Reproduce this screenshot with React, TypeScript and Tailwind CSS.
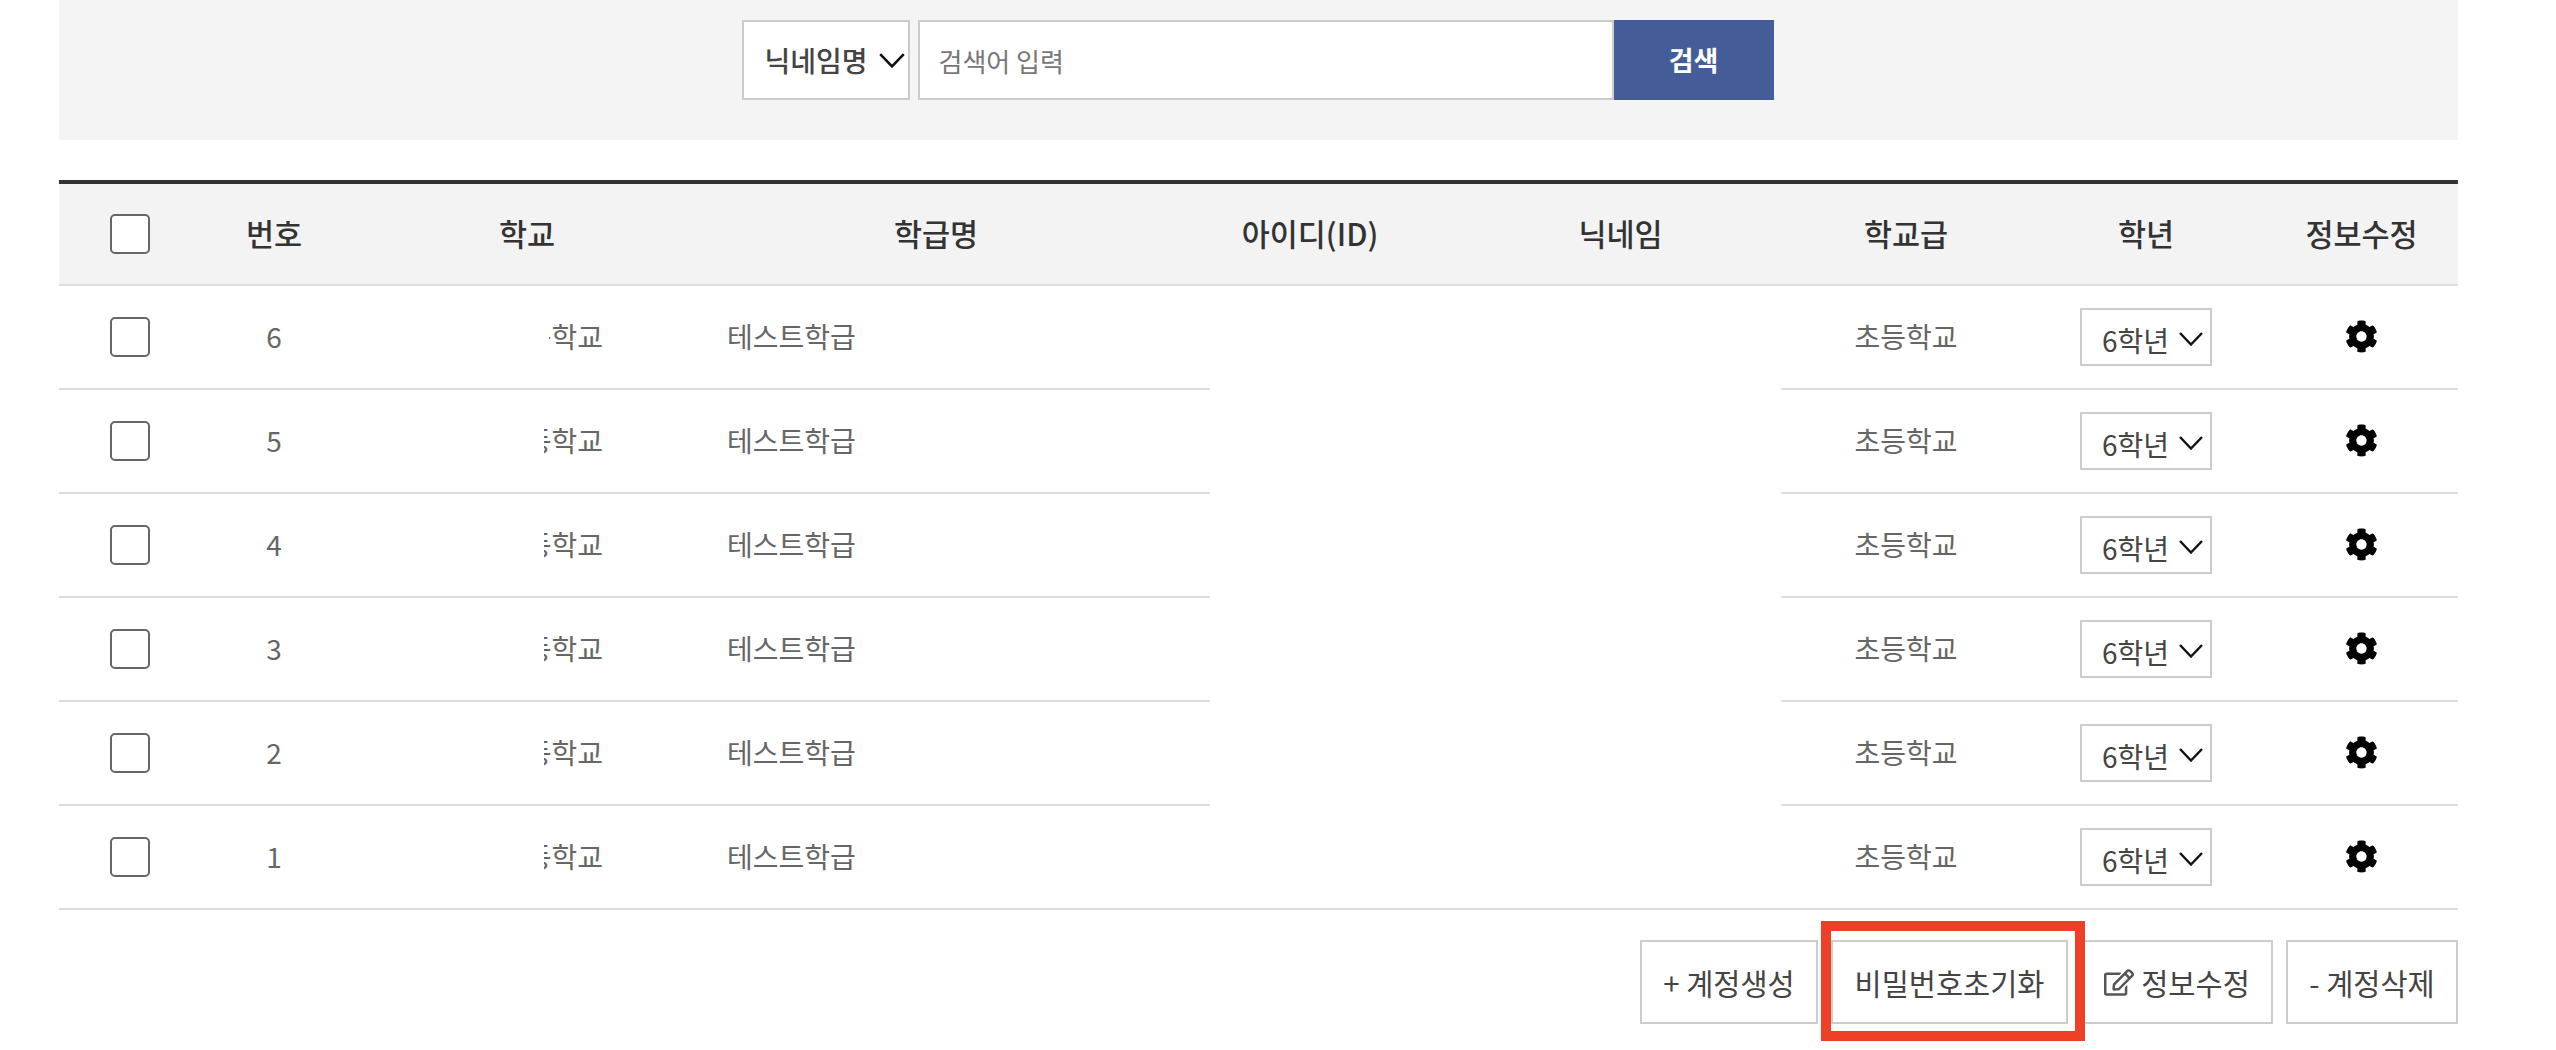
import { FaCog, FaRegEdit } from "react-icons/fa";

const rows = [6, 5, 4, 3, 2, 1];

function Chevron({ className }: { className: string }) {
  return (
    <svg viewBox="0 0 24 14" className={className} fill="none" stroke="#111" strokeWidth="2.4">
      <polyline points="1,1 12,12.5 23,1" />
    </svg>
  );
}

function Check() {
  return <div className="mx-auto w-[40px] h-[40px] rounded-[5px] border-2 border-[#666] bg-white" />;
}

export default function App() {
  const font = { fontFamily: '"Noto Sans CJK KR", "Noto Sans", sans-serif' };
  return (
    <div style={font} className="pl-[59px] pr-[98px] h-[1050px] bg-white overflow-hidden text-[#666]">
      <div className="h-[140px] bg-[#f4f4f4] pt-[20px] pr-[2px] flex justify-center">
        <div className="w-[168px] h-[80px] border-2 border-[#ccc] bg-white flex items-center pl-[21px] text-[28px] font-medium text-[#444]">
          <span>닉네임명</span>
          <Chevron className="w-[28px] h-[15px] ml-[10px]" />
        </div>
        <input
          placeholder="검색어 입력"
          className="ml-[8px] w-[696px] h-[80px] border-2 border-[#ccc] bg-white pl-[19px] text-[26px] placeholder:text-[#777] outline-none"
          style={font}
        />
        <button className="w-[160px] h-[80px] bg-[#445d98] text-white text-[27px] font-bold">검색</button>
      </div>

      <div className="mt-[40px] border-t-4 border-[#333]">
        <table className="w-full table-fixed border-separate border-spacing-0">
          <colgroup>
            <col className="w-[142px]" />
            <col className="w-[146px]" />
            <col className="w-[360px]" />
            <col className="w-[503px]" />
            <col className="w-[250px]" />
            <col className="w-[321px]" />
            <col className="w-[250px]" />
            <col className="w-[230px]" />
            <col className="w-[197px]" />
          </colgroup>
          <thead>
            <tr className="h-[102px] bg-[#f3f3f3] text-[30.5px] text-[#333]">
              <th className="border-b-2 border-[#ddd] font-medium"><Check /></th>
              <th className="border-b-2 border-[#ddd] font-medium">번호</th>
              <th className="border-b-2 border-[#ddd] font-medium">학교</th>
              <th className="border-b-2 border-[#ddd] font-medium pr-[45px]">학급명</th>
              <th className="border-b-2 border-[#ddd] font-medium pr-[50px]">아이디(ID)</th>
              <th className="border-b-2 border-[#ddd] font-medium">닉네임</th>
              <th className="border-b-2 border-[#ddd] font-medium">학교급</th>
              <th className="border-b-2 border-[#ddd] font-medium">학년</th>
              <th className="border-b-2 border-[#ddd] font-medium pl-[4px]">정보수정</th>
            </tr>
          </thead>
          <tbody className="text-[28px]">
            {rows.map((n, i) => (
              <tr key={n} className="h-[104px]">
                <td className="border-b-2 border-[#ddd]"><Check /></td>
                <td className="border-b-2 border-[#ddd] text-center pb-[2px]">{n}</td>
                <td className="border-b-2 border-[#ddd] pr-[104px] pb-[2px]">
                  <div className={i === 0 ? "ml-auto w-[54px] flex justify-end overflow-hidden" : "ml-auto w-[59px] flex justify-end overflow-hidden"}>
                    <span className="shrink-0">초등학교</span>
                  </div>
                </td>
                <td className="border-b-2 border-[#ddd] pl-[20px] pb-[2px]">테스트학급</td>
                {i === 0 && <td rowSpan={6} className="border-b-2 border-[#ddd]" />}
                {i === 0 && <td rowSpan={6} className="border-b-2 border-[#ddd]" />}
                <td className="border-b-2 border-[#ddd] text-center pb-[2px]">초등학교</td>
                <td className="border-b-2 border-[#ddd]">
                  <div className="mx-auto w-[132px] h-[58px] border-2 border-[#ccc] flex items-center pl-[20px] pt-[6px] text-[#444] text-[28px]">
                    <span>6학년</span>
                    <Chevron className="w-[26px] h-[14px] ml-[9px] -mt-[2px]" />
                  </div>
                </td>
                <td className="border-b-2 border-[#ddd]">
                  <div className="flex justify-center pl-[4px] pb-[2px]">
                    <FaCog className="w-[33px] h-[33px] text-black" />
                  </div>
                </td>
              </tr>
            ))}
          </tbody>
        </table>
      </div>

      <div className="mt-[30px] flex justify-end gap-[13px] text-[29.5px] text-[#444]">
        <button className="w-[178px] h-[84px] border-2 border-[#ccc]">+ 계정생성</button>
        <div className="relative">
          <button className="w-[237px] h-[84px] border-2 border-[#ccc]">비밀번호초기화</button>
          <div className="absolute left-[-10px] top-[-19px] w-[264px] h-[120px] border-[10px] border-[#ee4026] pointer-events-none" />
        </div>
        <button className="w-[192px] h-[84px] border-2 border-[#ccc] flex items-center justify-center gap-[7px]">
          <FaRegEdit className="w-[30px] h-[27px] text-[#555]" />
          <span>정보수정</span>
        </button>
        <button className="w-[172px] h-[84px] border-2 border-[#ccc]">- 계정삭제</button>
      </div>
    </div>
  );
}
